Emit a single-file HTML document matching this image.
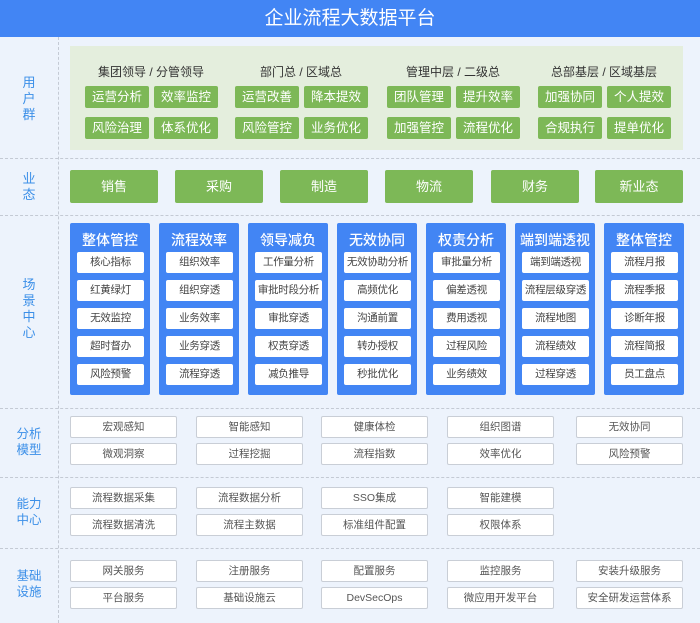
<!DOCTYPE html>
<html><head><meta charset="utf-8"><style>
*{margin:0;padding:0;box-sizing:border-box}
body{width:700px;height:623px;background:#edf3fc;font-family:"Liberation Sans","Noto Sans CJK SC",sans-serif;position:relative;overflow:hidden}
.a{position:absolute}
.hd{left:0;top:0;width:700px;height:37px;background:#4285f4;color:#fff;font-size:19px;text-align:center;line-height:37px}
.vl{left:58px;top:37px;height:586px;border-left:1px dashed #c4cad4}
.hl{left:0;width:700px;border-top:1px dashed #c4cad4}
.lb{left:0;width:58px;color:#3b8fe8;font-size:13px;text-align:center;line-height:16px}
.gp{left:70px;top:46px;width:613px;height:104px;background:#e4eedd}
.gt{font-size:12px;color:#333;text-align:center;width:150px}
.gb{height:22px;width:64px;background:#7db857;color:#fff;font-size:12.5px;text-align:center;line-height:22px;border-radius:2px}
.bz{top:170px;height:33px;width:88px;background:#7db857;color:#fff;font-size:13px;text-align:center;line-height:33px;border-radius:2px}
.col{top:223px;width:80px;height:172px;background:#4285f4;border-radius:2px}
.col .t{color:#fff;font-size:14px;font-weight:500;text-align:center;margin-top:7px;height:20px}
.col .i{position:absolute;left:7px;width:67px;height:21px;background:#fff;border-radius:2px;font-size:10.5px;color:#444;text-align:center;line-height:21px;white-space:nowrap;letter-spacing:-0.3px}
.w{width:107px;height:22px;background:#fff;border:1px solid #c9ced6;border-radius:2px;font-size:10.5px;color:#555;text-align:center;line-height:20px}
</style></head><body>
<div class="a hd">企业流程大数据平台</div>
<div class="a vl"></div>
<div class="a hl" style="top:158px"></div>
<div class="a hl" style="top:215px"></div>
<div class="a hl" style="top:408px"></div>
<div class="a hl" style="top:477px"></div>
<div class="a hl" style="top:548px"></div>

<div class="a lb" style="top:75px">用<br>户<br>群</div>
<div class="a lb" style="top:171px">业<br>态</div>
<div class="a lb" style="top:277px">场<br>景<br>中<br>心</div>
<div class="a lb" style="top:426px;font-size:12.5px">分析<br>模型</div>
<div class="a lb" style="top:496px;font-size:12.5px">能力<br>中心</div>
<div class="a lb" style="top:568px;font-size:12.5px">基础<br>设施</div>

<div class="a gp"></div>
<div class="a gt" style="left:76px;top:63px">集团领导 / 分管领导</div>
<div class="a gt" style="left:226px;top:63px">部门总 / 区域总</div>
<div class="a gt" style="left:378px;top:63px">管理中层 / 二级总</div>
<div class="a gt" style="left:529px;top:63px">总部基层 / 区域基层</div>
<div class="a gb" style="left:85px;top:86px">运营分析</div><div class="a gb" style="left:154px;top:86px">效率监控</div>
<div class="a gb" style="left:85px;top:117px">风险治理</div><div class="a gb" style="left:154px;top:117px">体系优化</div>
<div class="a gb" style="left:235px;top:86px">运营改善</div><div class="a gb" style="left:304px;top:86px">降本提效</div>
<div class="a gb" style="left:235px;top:117px">风险管控</div><div class="a gb" style="left:304px;top:117px">业务优化</div>
<div class="a gb" style="left:387px;top:86px">团队管理</div><div class="a gb" style="left:456px;top:86px">提升效率</div>
<div class="a gb" style="left:387px;top:117px">加强管控</div><div class="a gb" style="left:456px;top:117px">流程优化</div>
<div class="a gb" style="left:538px;top:86px">加强协同</div><div class="a gb" style="left:607px;top:86px">个人提效</div>
<div class="a gb" style="left:538px;top:117px">合规执行</div><div class="a gb" style="left:607px;top:117px">提单优化</div>

<div class="a bz" style="left:70px">销售</div>
<div class="a bz" style="left:175px">采购</div>
<div class="a bz" style="left:280px">制造</div>
<div class="a bz" style="left:385px">物流</div>
<div class="a bz" style="left:491px">财务</div>
<div class="a bz" style="left:595px">新业态</div>

<div class="a col" style="left:70px"><div class="t">整体管控</div>
<div class="i" style="top:29px">核心指标</div><div class="i" style="top:57px">红黄绿灯</div><div class="i" style="top:85px">无效监控</div><div class="i" style="top:113px">超时督办</div><div class="i" style="top:141px">风险预警</div></div>
<div class="a col" style="left:159px"><div class="t">流程效率</div>
<div class="i" style="top:29px">组织效率</div><div class="i" style="top:57px">组织穿透</div><div class="i" style="top:85px">业务效率</div><div class="i" style="top:113px">业务穿透</div><div class="i" style="top:141px">流程穿透</div></div>
<div class="a col" style="left:248px"><div class="t">领导减负</div>
<div class="i" style="top:29px">工作量分析</div><div class="i" style="top:57px">审批时段分析</div><div class="i" style="top:85px">审批穿透</div><div class="i" style="top:113px">权责穿透</div><div class="i" style="top:141px">减负推导</div></div>
<div class="a col" style="left:337px"><div class="t">无效协同</div>
<div class="i" style="top:29px">无效协助分析</div><div class="i" style="top:57px">高频优化</div><div class="i" style="top:85px">沟通前置</div><div class="i" style="top:113px">转办授权</div><div class="i" style="top:141px">秒批优化</div></div>
<div class="a col" style="left:426px"><div class="t">权责分析</div>
<div class="i" style="top:29px">审批量分析</div><div class="i" style="top:57px">偏差透视</div><div class="i" style="top:85px">费用透视</div><div class="i" style="top:113px">过程风险</div><div class="i" style="top:141px">业务绩效</div></div>
<div class="a col" style="left:515px"><div class="t">端到端透视</div>
<div class="i" style="top:29px">端到端透视</div><div class="i" style="top:57px">流程层级穿透</div><div class="i" style="top:85px">流程地图</div><div class="i" style="top:113px">流程绩效</div><div class="i" style="top:141px">过程穿透</div></div>
<div class="a col" style="left:604px"><div class="t">整体管控</div>
<div class="i" style="top:29px">流程月报</div><div class="i" style="top:57px">流程季报</div><div class="i" style="top:85px">诊断年报</div><div class="i" style="top:113px">流程简报</div><div class="i" style="top:141px">员工盘点</div></div>

<div class="a w" style="left:70px;top:416px">宏观感知</div><div class="a w" style="left:196px;top:416px">智能感知</div><div class="a w" style="left:321px;top:416px">健康体检</div><div class="a w" style="left:447px;top:416px">组织图谱</div><div class="a w" style="left:576px;top:416px">无效协同</div>
<div class="a w" style="left:70px;top:443px">微观洞察</div><div class="a w" style="left:196px;top:443px">过程挖掘</div><div class="a w" style="left:321px;top:443px">流程指数</div><div class="a w" style="left:447px;top:443px">效率优化</div><div class="a w" style="left:576px;top:443px">风险预警</div>

<div class="a w" style="left:70px;top:487px">流程数据采集</div><div class="a w" style="left:196px;top:487px">流程数据分析</div><div class="a w" style="left:321px;top:487px">SSO集成</div><div class="a w" style="left:447px;top:487px">智能建模</div>
<div class="a w" style="left:70px;top:514px">流程数据清洗</div><div class="a w" style="left:196px;top:514px">流程主数据</div><div class="a w" style="left:321px;top:514px">标准组件配置</div><div class="a w" style="left:447px;top:514px">权限体系</div>

<div class="a w" style="left:70px;top:560px">网关服务</div><div class="a w" style="left:196px;top:560px">注册服务</div><div class="a w" style="left:321px;top:560px">配置服务</div><div class="a w" style="left:447px;top:560px">监控服务</div><div class="a w" style="left:576px;top:560px">安装升级服务</div>
<div class="a w" style="left:70px;top:587px">平台服务</div><div class="a w" style="left:196px;top:587px">基础设施云</div><div class="a w" style="left:321px;top:587px">DevSecOps</div><div class="a w" style="left:447px;top:587px">微应用开发平台</div><div class="a w" style="left:576px;top:587px">安全研发运营体系</div>
</body></html>
